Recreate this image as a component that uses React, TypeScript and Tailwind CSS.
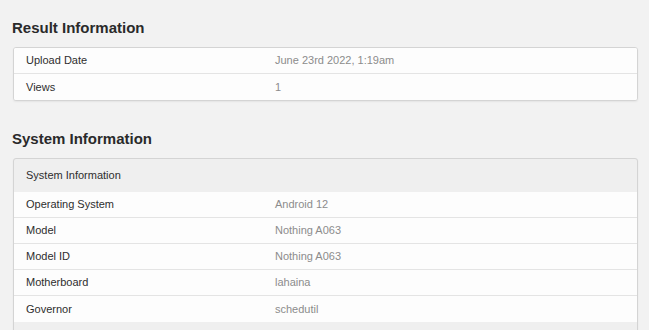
const RESULT: [string, string][] = [
  ['Upload Date', 'June 23rd 2022, 1:19am'],
  ['Views', '1'],
];

const SYSTEM: [string, string][] = [
  ['Operating System', 'Android 12'],
  ['Model', 'Nothing A063'],
  ['Model ID', 'Nothing A063'],
  ['Motherboard', 'lahaina'],
  ['Governor', 'schedutil'],
];

function Row({ label, value, last }: { label: string; value: string; last?: boolean }) {
  return (
    <div className={`flex items-center h-[26px] bg-[#fdfdfd] ${last ? 'h-[25px]' : 'border-b border-[#e4e4e4]'}`}>
      <div className="w-[261px] pl-[12px] text-[11px] text-[#2e2e2e]">{label}</div>
      <div className="flex-1 text-[11px] text-[#8c8c8c]">{value}</div>
    </div>
  );
}

export default function App() {
  return (
    <div
      className="min-h-screen bg-[#f2f2f2] pl-3 pr-[11px] pt-[19px] pb-4"
      style={{ fontFamily: '"Liberation Sans", Arial, sans-serif' }}
    >
      <h2 className="text-[15px] leading-[17px] font-bold text-[#2a2a2a] mb-[11px]">Result Information</h2>
      <div className="ml-px rounded-[3px] border border-[#d4d4d4] bg-[#fdfdfd] overflow-hidden shadow-[0_1px_2px_rgba(0,0,0,0.06)]">
        {RESULT.map(([k, v], i) => (
          <Row key={k} label={k} value={v} last={i === RESULT.length - 1} />
        ))}
      </div>

      <h2 className="mt-[29px] text-[15px] leading-[17px] font-bold text-[#2a2a2a] mb-[11px]">System Information</h2>
      <div className="ml-px rounded-[3px] border border-[#d4d4d4] bg-[#efefef] overflow-hidden pb-3 shadow-[0_1px_2px_rgba(0,0,0,0.06)]">
        <div className="h-[33px] flex items-center pl-[12px] text-[11px] text-[#2e2e2e]">System Information</div>
        {SYSTEM.map(([k, v], i) => (
          <Row key={k} label={k} value={v} last={i === SYSTEM.length - 1} />
        ))}
      </div>
    </div>
  );
}
